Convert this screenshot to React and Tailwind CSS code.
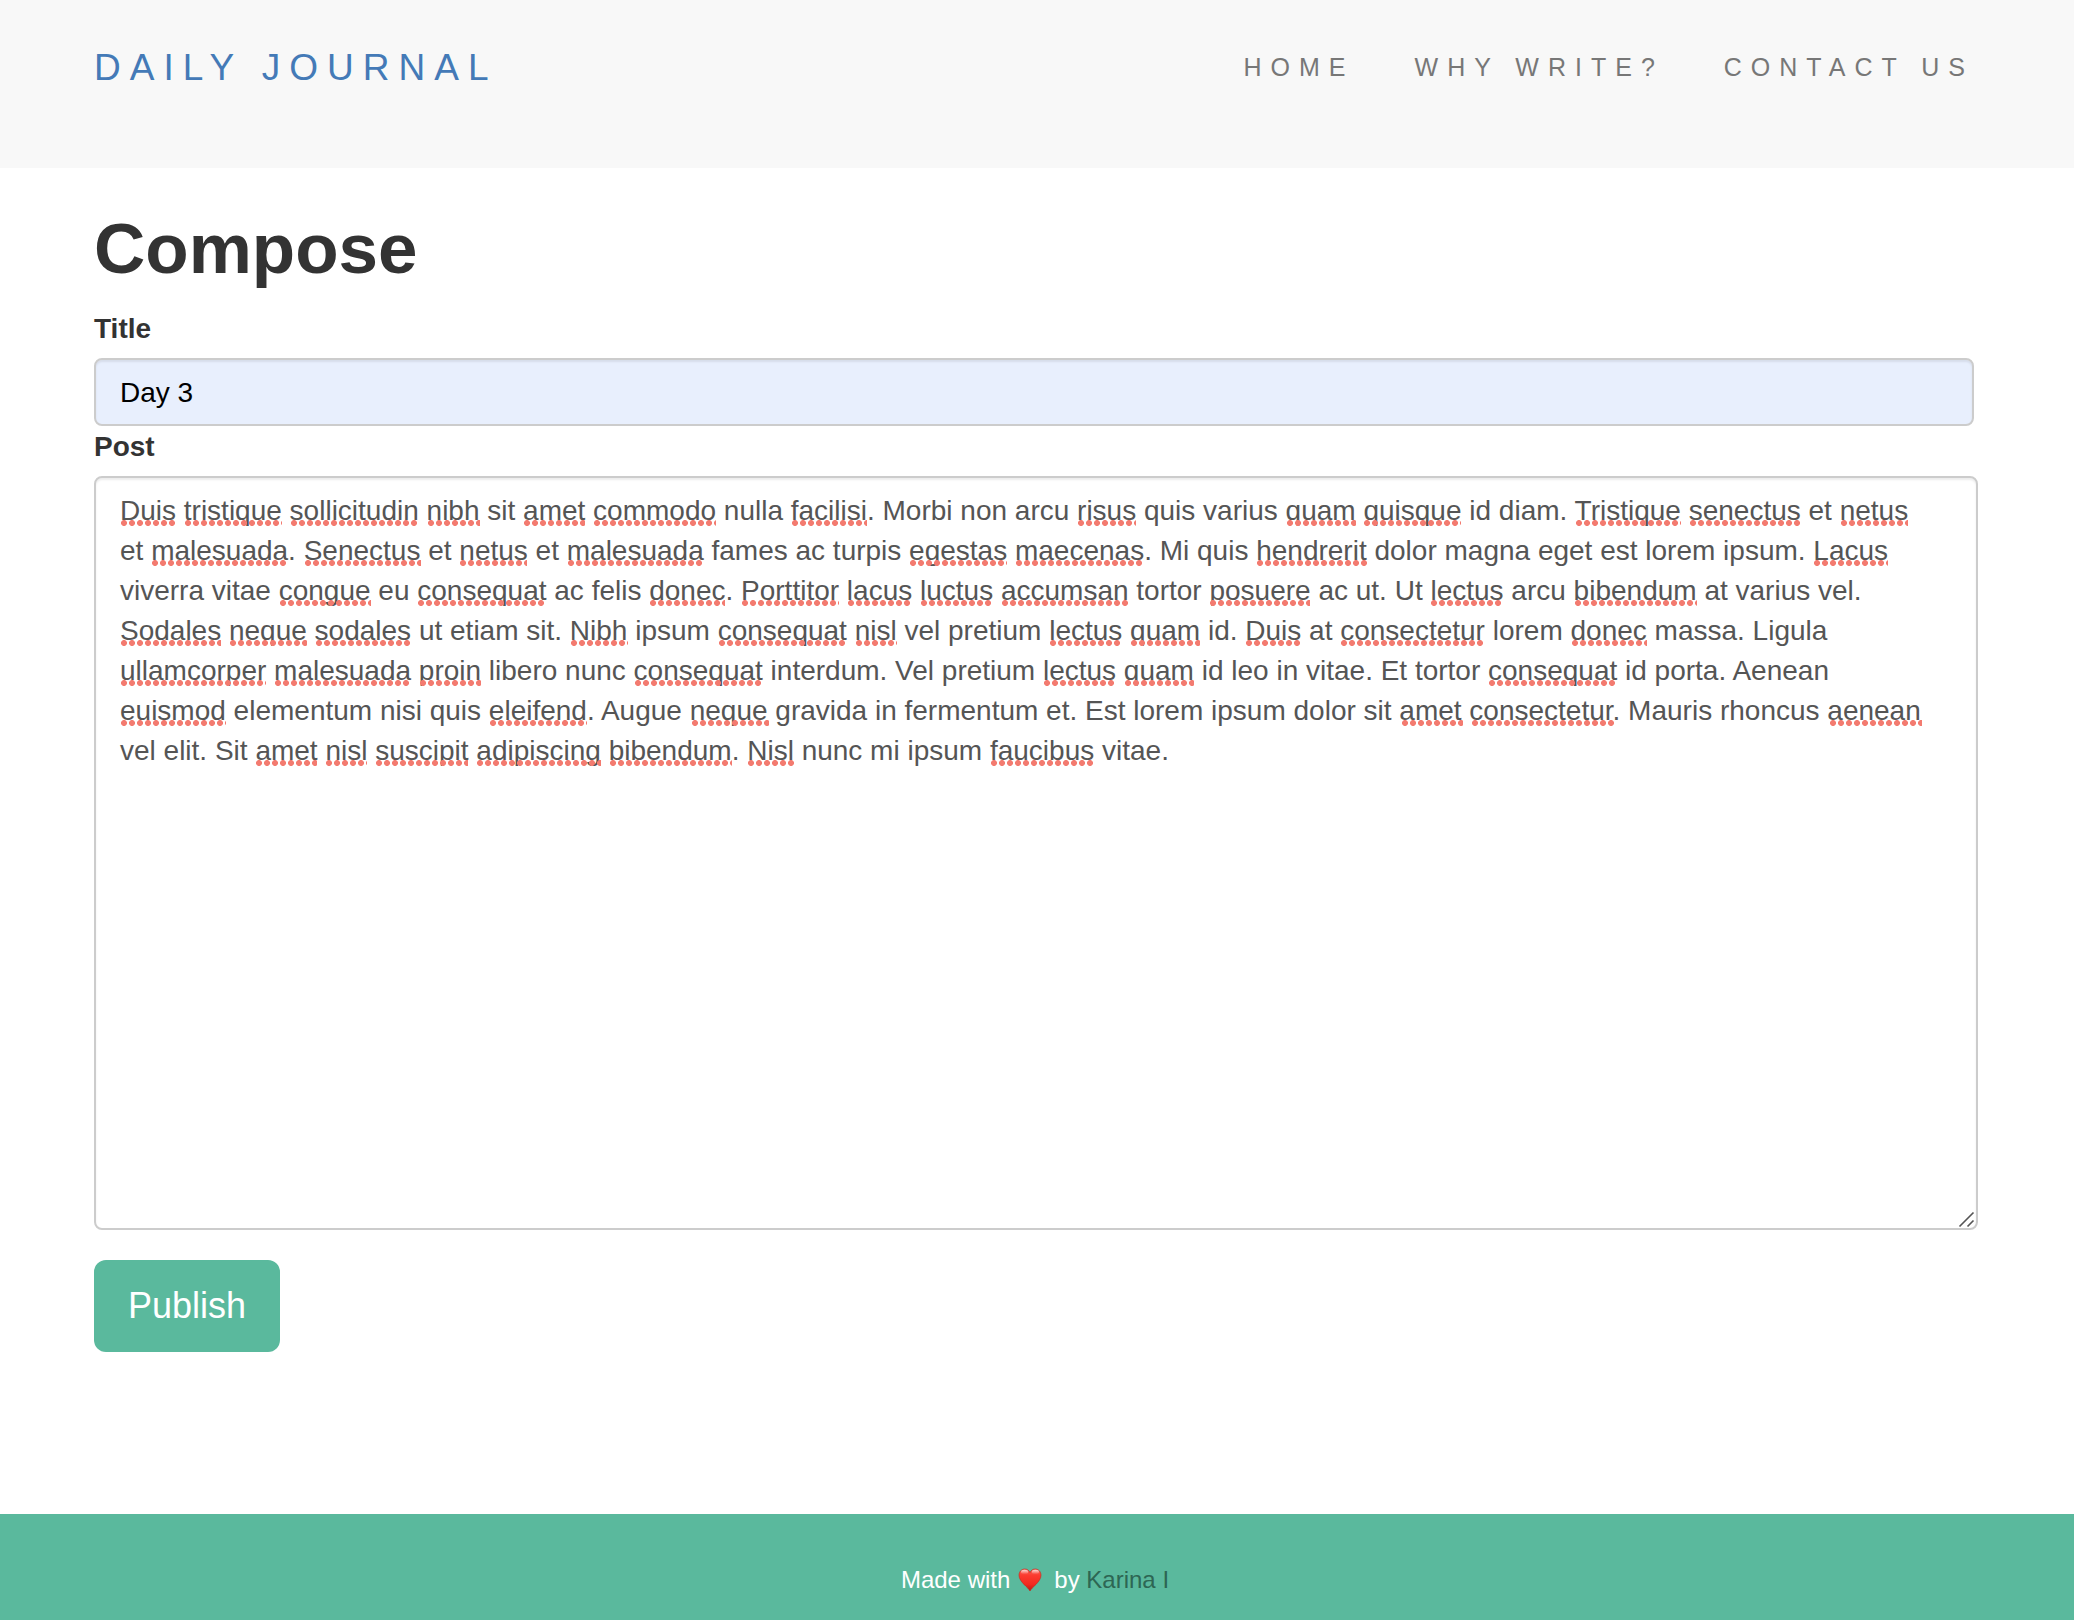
import { useMemo } from "react";

const NAV_LINKS = ["Home", "Why write?", "Contact us"];

// Words wrapped in asterisks are the ones the spell checker marks.
const MARKED_LINES = [
  "*Duis* *tristique* *sollicitudin* *nibh* sit *amet* *commodo* nulla *facilisi*. Morbi non arcu *risus* quis varius *quam* *quisque* id diam. *Tristique* *senectus* et *netus*",
  "et *malesuada*. *Senectus* et *netus* et *malesuada* fames ac turpis *egestas* *maecenas*. Mi quis *hendrerit* dolor magna eget est lorem ipsum. *Lacus*",
  "viverra vitae *congue* eu *consequat* ac felis *donec*. *Porttitor* *lacus* *luctus* *accumsan* tortor *posuere* ac ut. Ut *lectus* arcu *bibendum* at varius vel.",
  "*Sodales* *neque* *sodales* ut etiam sit. *Nibh* ipsum *consequat* *nisl* vel pretium *lectus* *quam* id. *Duis* at *consectetur* lorem *donec* massa. Ligula",
  "*ullamcorper* *malesuada* *proin* libero nunc *consequat* interdum. Vel pretium *lectus* *quam* id leo in vitae. Et tortor *consequat* id porta. Aenean",
  "*euismod* elementum nisi quis *eleifend*. Augue *neque* gravida in fermentum et. Est lorem ipsum dolor sit *amet* *consectetur*. Mauris rhoncus *aenean*",
  "vel elit. Sit *amet* *nisl* *suscipit* *adipiscing* *bibendum*. *Nisl* nunc mi ipsum *faucibus* vitae.",
];

const POST = MARKED_LINES.join("\n").replaceAll("*", "");

// Finds where each marked word starts in its line, and how wide it is.
function measureMarks() {
  const ctx = document.createElement("canvas").getContext("2d");
  ctx.font = '28px "Liberation Sans", Arial, sans-serif';
  return MARKED_LINES.map((line) => {
    const marks = [];
    let before = "";
    line.split("*").forEach((part, i) => {
      if (i % 2) {
        marks.push({
          left: Math.round(ctx.measureText(before).width),
          width: Math.round(ctx.measureText(part).width),
        });
      }
      before += part;
    });
    return marks;
  });
}

function SpellingMarks() {
  const lines = useMemo(measureMarks, []);
  return (
    <div
      aria-hidden="true"
      className="pointer-events-none col-start-1 row-start-1 border-2 border-transparent px-6 pt-3"
    >
      {lines.map((marks, i) => (
        <div key={i} className="relative h-10">
          {marks.map(({ left, width }) => (
            <span
              key={left}
              className="absolute bottom-1 h-1.5 bg-[radial-gradient(circle_3px,#f37b70_95%,transparent)] bg-[length:8px_6px] bg-repeat-x"
              style={{ left, width }}
            />
          ))}
        </div>
      ))}
    </div>
  );
}

function Heart() {
  return (
    <svg viewBox="0 0 24 24" className="mx-2 inline-block size-6" role="img" aria-label="love">
      <defs>
        <linearGradient id="heart-fill" x1="0" y1="0" x2="0" y2="1">
          <stop offset="0" stopColor="#f8665a" />
          <stop offset="0.3" stopColor="#fb3a2f" />
          <stop offset="0.7" stopColor="#f22a20" />
          <stop offset="1" stopColor="#b81a10" />
        </linearGradient>
        <linearGradient id="heart-shine" x1="0" y1="0" x2="0" y2="1">
          <stop offset="0" stopColor="#fff" stopOpacity="0.75" />
          <stop offset="1" stopColor="#fff" stopOpacity="0" />
        </linearGradient>
      </defs>
      <path
        d="M12 23C10.5 19.5 1 14 1 7.2C1 3.6 3.6 1 6.8 1C9.2 1 11.2 2.4 12 4.6C12.8 2.4 14.8 1 17.2 1C20.4 1 23 3.6 23 7.2C23 14 13.5 19.5 12 23Z"
        fill="url(#heart-fill)"
        stroke="#c3261b"
        strokeWidth="0.6"
      />
      <ellipse cx="6.6" cy="4" rx="3.6" ry="2.2" fill="url(#heart-shine)" />
      <ellipse cx="17.4" cy="4" rx="3.6" ry="2.2" fill="url(#heart-shine)" />
    </svg>
  );
}

export default function App() {
  return (
    <div className="flex min-h-screen flex-col bg-white font-['Liberation_Sans',Arial,sans-serif] text-[28px] leading-10 text-[#333]">
      <header className="bg-[#f8f8f8]">
        <nav className="flex h-42 items-start justify-between pt-12 pr-[100px] pl-[94px] uppercase">
          <a href="#" className="text-[37px] tracking-[9px] text-[#447ab7]">
            Daily Journal
          </a>
          <ul className="flex gap-15 text-[25px] leading-[38px] tracking-[9px] text-[#777]">
            {NAV_LINKS.map((label) => (
              <li key={label}>
                <a href="#">{label}</a>
              </li>
            ))}
          </ul>
        </nav>
      </header>

      <main className="flex-1 pt-[41px] pr-[100px] pb-30 pl-[94px]">
        <h1 className="text-[71px] leading-20 font-bold">Compose</h1>
        <form className="mt-5">
          <label htmlFor="title" className="block font-bold">
            Title
          </label>
          <input
            id="title"
            type="text"
            defaultValue="Day 3"
            className="mt-[9px] block h-17 w-full rounded-lg border-2 border-[#ccc] bg-[#e8effd] px-6 pt-0.5 text-black shadow-[inset_0_2px_2px_rgba(0,0,0,0.075)] outline-none"
          />
          <label htmlFor="post" className="block pt-px font-bold">
            Post
          </label>
          <div className="mt-[9px] -mr-1 grid">
            <textarea
              id="post"
              spellCheck={false}
              defaultValue={POST}
              className="col-start-1 row-start-1 block h-[754px] w-full resize-none rounded-lg border-2 border-[#ccc] px-6 pt-[13px] pb-3 text-[28px] leading-10 text-[#555] shadow-[inset_0_2px_2px_rgba(0,0,0,0.075)] outline-none"
            />
            <SpellingMarks />
            <svg
              viewBox="0 0 20 20"
              aria-hidden="true"
              className="pointer-events-none col-start-1 row-start-1 size-5 self-end justify-self-end"
              fill="none"
              stroke="#555"
              strokeWidth="1.6"
            >
              <path d="M1.5 16.5L15.5 2.5M9.5 16.5L15.5 10.5" />
            </svg>
          </div>
          <button
            type="submit"
            className="mt-[30px] block h-23 rounded-xl bg-[#5ab99d] px-[34px] text-[36px] text-white"
          >
            Publish
          </button>
        </form>
      </main>

      <footer className="bg-[#5ab99d] pt-[46px] pb-5 pr-1 text-center text-2xl leading-10 text-white">
        <p className="flex items-center justify-center">
          Made with
          <Heart />
          <span className="ml-1">
            by{" "}
            <a href="#" className="text-[#2d6653]">
              Karina I
            </a>
          </span>
        </p>
      </footer>
    </div>
  );
}
